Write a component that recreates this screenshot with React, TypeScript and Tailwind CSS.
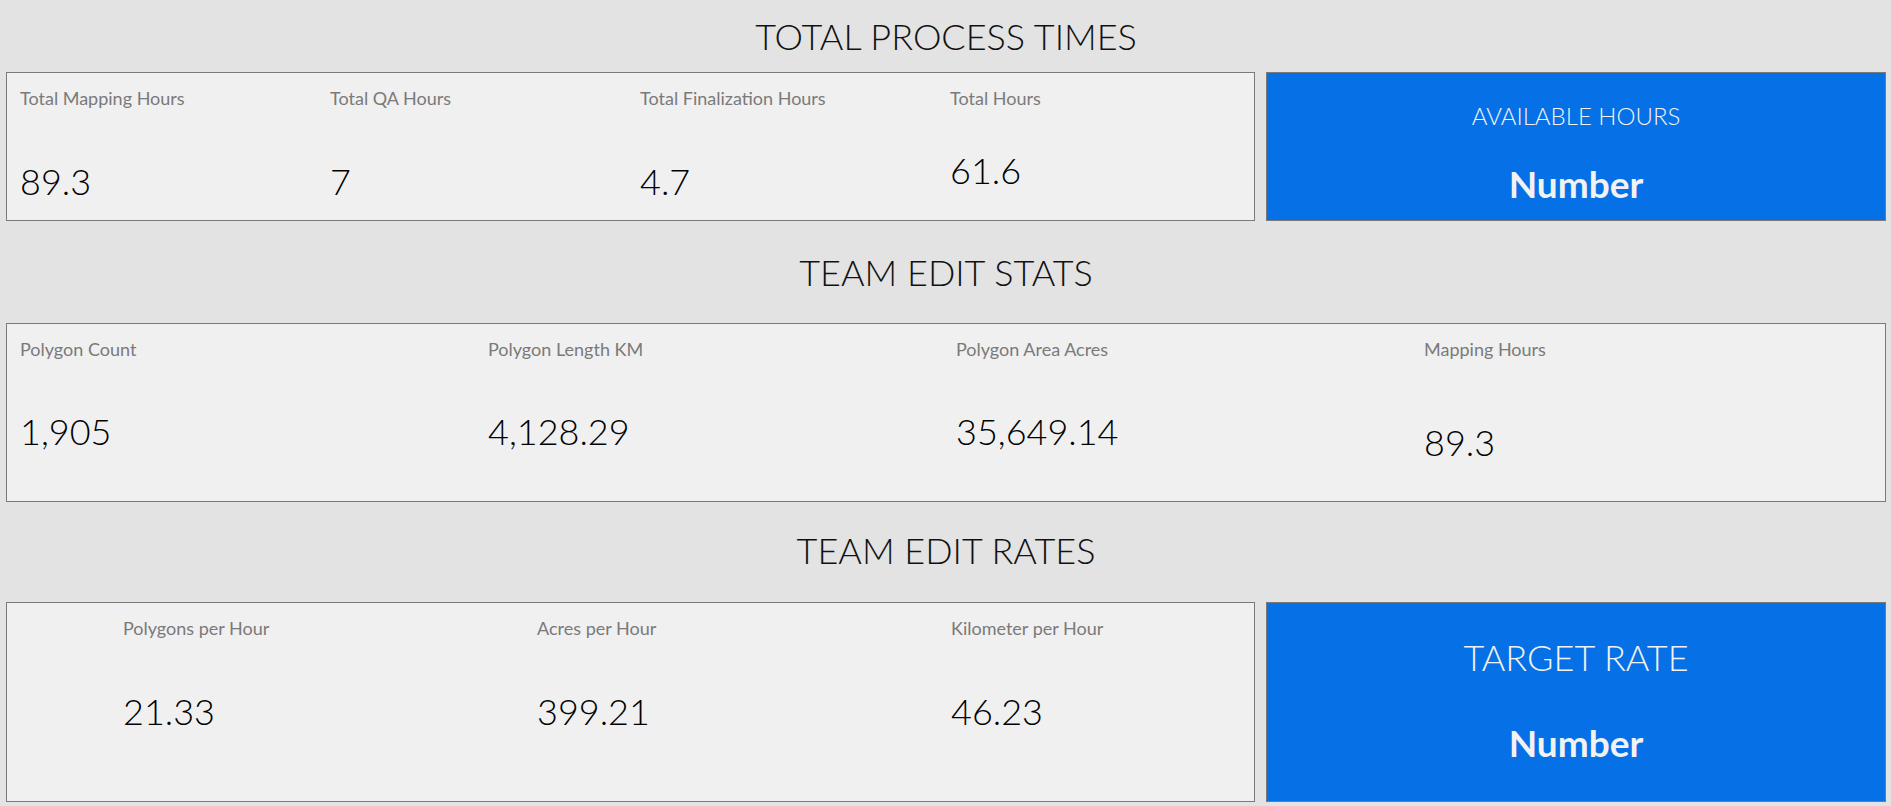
const font = { fontFamily: "Lato, 'Open Sans', sans-serif" };

type Stat = { label: string; value: string; valueTop: string };

const processTimes: Stat[] = [
  { label: "Total Mapping Hours", value: "89.3", valueTop: "mt-[51px]" },
  { label: "Total QA Hours", value: "7", valueTop: "mt-[51px]" },
  { label: "Total Finalization Hours", value: "4.7", valueTop: "mt-[51px]" },
  { label: "Total Hours", value: "61.6", valueTop: "mt-[40px]" },
];

const editStats: Stat[] = [
  { label: "Polygon Count", value: "1,905", valueTop: "mt-[50px]" },
  { label: "Polygon Length KM", value: "4,128.29", valueTop: "mt-[50px]" },
  { label: "Polygon Area Acres", value: "35,649.14", valueTop: "mt-[50px]" },
  { label: "Mapping Hours", value: "89.3", valueTop: "mt-[61px]" },
];

const editRates: Stat[] = [
  { label: "Polygons per Hour", value: "21.33", valueTop: "mt-[51px]" },
  { label: "Acres per Hour", value: "399.21", valueTop: "mt-[51px]" },
  { label: "Kilometer per Hour", value: "46.23", valueTop: "mt-[51px]" },
];

function SectionTitle({ text, height }: { text: string; height: string }) {
  return (
    <div className={`${height} flex items-center justify-center`}>
      <h2 className="text-[36px] font-light text-[#111] leading-none">{text}</h2>
    </div>
  );
}

function StatColumn({ stat, width }: { stat: Stat; width: string }) {
  return (
    <div className={`${width} shrink-0 flex flex-col pt-[15px]`}>
      <div className="text-[18px] leading-[20px] text-[#7a7a7a] font-normal">{stat.label}</div>
      <div className={`${stat.valueTop} text-[36px] leading-[44px] text-black font-light`}>{stat.value}</div>
    </div>
  );
}

function BlueCard({ title, titleSize, gap, pt }: { title: string; titleSize: string; gap: string; pt: string }) {
  return (
    <div className={`flex-1 bg-[#0670e6] border border-[#7a7a7a] flex flex-col items-center ${pt}`}>
      <div className={`${titleSize} font-light text-[#f2f2f2] leading-none`}>{title}</div>
      <div className={`${gap} text-[37px] font-bold text-[#f2f2f2] leading-none`}>Number</div>
    </div>
  );
}

export default function App() {
  return (
    <div className="min-h-screen w-full bg-[#e3e3e3] pl-[6px] pr-[5px] pb-[4px]" style={font}>
      <SectionTitle text="TOTAL PROCESS TIMES" height="h-[72px]" />
      <div className="flex gap-[11px] h-[149px]">
        <div className="w-[1249px] bg-[#f0f0f0] border border-[#7a7a7a] flex pl-[13px]">
          {processTimes.map((s) => (
            <StatColumn key={s.label} stat={s} width="w-[310px]" />
          ))}
        </div>
        <BlueCard title="AVAILABLE HOURS" titleSize="text-[24px]" gap="mt-[37px]" pt="pt-[31px]" />
      </div>

      <SectionTitle text="TEAM EDIT STATS" height="h-[102px]" />
      <div className="h-[179px] bg-[#f0f0f0] border border-[#7a7a7a] flex pl-[13px]">
        {editStats.map((s) => (
          <StatColumn key={s.label} stat={s} width="w-[468px]" />
        ))}
      </div>

      <div className="h-[100px] flex items-center justify-center pb-[4px]">
        <h2 className="text-[36px] font-light text-[#111] leading-none">TEAM EDIT RATES</h2>
      </div>
      <div className="flex gap-[11px] h-[200px]">
        <div className="w-[1249px] bg-[#f0f0f0] border border-[#7a7a7a] flex pl-[116px]">
          {editRates.map((s) => (
            <StatColumn key={s.label} stat={s} width="w-[414px]" />
          ))}
        </div>
        <BlueCard title="TARGET RATE" titleSize="text-[36px]" gap="mt-[49px]" pt="pt-[36px]" />
      </div>
    </div>
  );
}
